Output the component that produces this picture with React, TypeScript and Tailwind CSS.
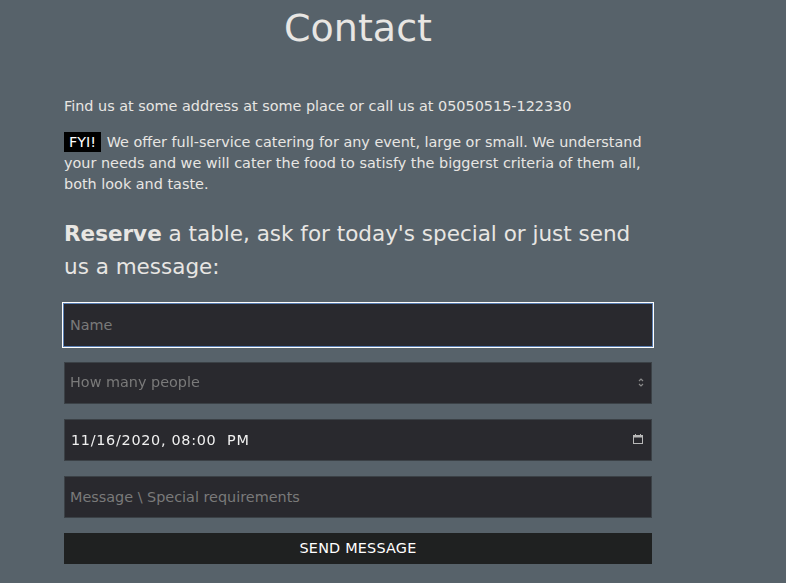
import { useEffect, useRef } from "react";

export default function App() {
  const nameRef = useRef<HTMLInputElement>(null);

  useEffect(() => {
    nameRef.current?.focus();
  }, []);

  return (
    <div className="min-h-[583px] bg-[#57626a] font-['DejaVu_Sans',sans-serif] text-[#e8e6e3]">
      <div className="w-[588px] ml-16 pb-5">
        {/* Title */}
        <h1 className="text-center text-[38px] leading-[56px] text-[#e8e6e3] font-normal">
          Contact
        </h1>

        <p className="mt-[40px] text-[14.4px] leading-[21px]">
          Find us at some address at some place or call us at 05050515-122330
        </p>

        <p className="mt-[15px] text-[14.4px] leading-[21px]">
          <span className="bg-black text-white px-[5px] py-[2px] mr-[1px]">FYI!</span>{" "}
          We offer full-service catering for any event, large or small. We understand
          your needs and we will cater the food to satisfy the biggerst criteria of them all,
          both look and taste.
        </p>

        <p className="mt-[22px] text-[21.5px] leading-[33px]">
          <span className="font-bold">Reserve</span> a table, ask for today's special or just send
          us a message:
        </p>

        {/* Form */}
        <form className="mt-[20px] flex flex-col" onSubmit={(e) => e.preventDefault()}>
          <input
            ref={nameRef}
            type="text"
            placeholder="Name"
            className="h-[44px] w-[590px] -ml-[1px] px-[6px] bg-[#29292e] border border-[#5b80b4] outline outline-1 outline-white text-[14.4px] text-[#e8e6e3] placeholder:text-[#7a7a7a] caret-white"
          />

          <div className="relative mt-[15px]">
            <select
              defaultValue=""
              className="h-[42px] w-[588px] appearance-none px-[5px] bg-[#29292e] border border-[#3b4146] text-[14.4px] text-[#7a7a7a] outline-none"
            >
              <option value="" disabled>
                How many people
              </option>
              <option value="1">1</option>
              <option value="2">2</option>
            </select>
            <svg
              className="absolute right-[8px] top-[15px] pointer-events-none"
              width="6"
              height="11"
              viewBox="0 0 6 11"
              fill="none"
              stroke="#8a8a8a"
              strokeWidth="1.2"
            >
              <path d="M1 4 L3 2 L5 4" />
              <path d="M1 7 L3 9 L5 7" />
            </svg>
          </div>

          <div className="relative mt-[15px]">
            <input
              type="text"
              readOnly
              value="11/16/2020, 08:00  PM"
              className="h-[42px] w-[588px] px-[6px] bg-[#29292e] border border-[#3b4146] text-[14.4px] text-[#f0f0f0] outline-none whitespace-pre tracking-[0.7px]"
            />
            <svg
              className="absolute right-[9px] top-[15px] pointer-events-none"
              width="10"
              height="10"
              viewBox="0 0 10 10"
              fill="none"
            >
              <rect x="0.5" y="1.5" width="9" height="8" stroke="#b8b8b8" />
              <rect x="0.5" y="1.5" width="9" height="2" fill="#b8b8b8" />
              <rect x="2" y="0" width="1" height="2" fill="#b8b8b8" />
              <rect x="7" y="0" width="1" height="2" fill="#b8b8b8" />
            </svg>
          </div>

          <input
            type="text"
            placeholder="Message \ Special requirements"
            className="mt-[15px] h-[42px] w-[588px] px-[5px] bg-[#29292e] border border-[#3b4146] text-[14.4px] text-[#e8e6e3] placeholder:text-[#7a7a7a] outline-none"
          />

          <button
            type="submit"
            className="mt-[15px] h-[31px] w-[588px] bg-[#1f2121] text-white text-[14.4px] tracking-[0.2px]"
          >
            SEND MESSAGE
          </button>
        </form>
      </div>
    </div>
  );
}
